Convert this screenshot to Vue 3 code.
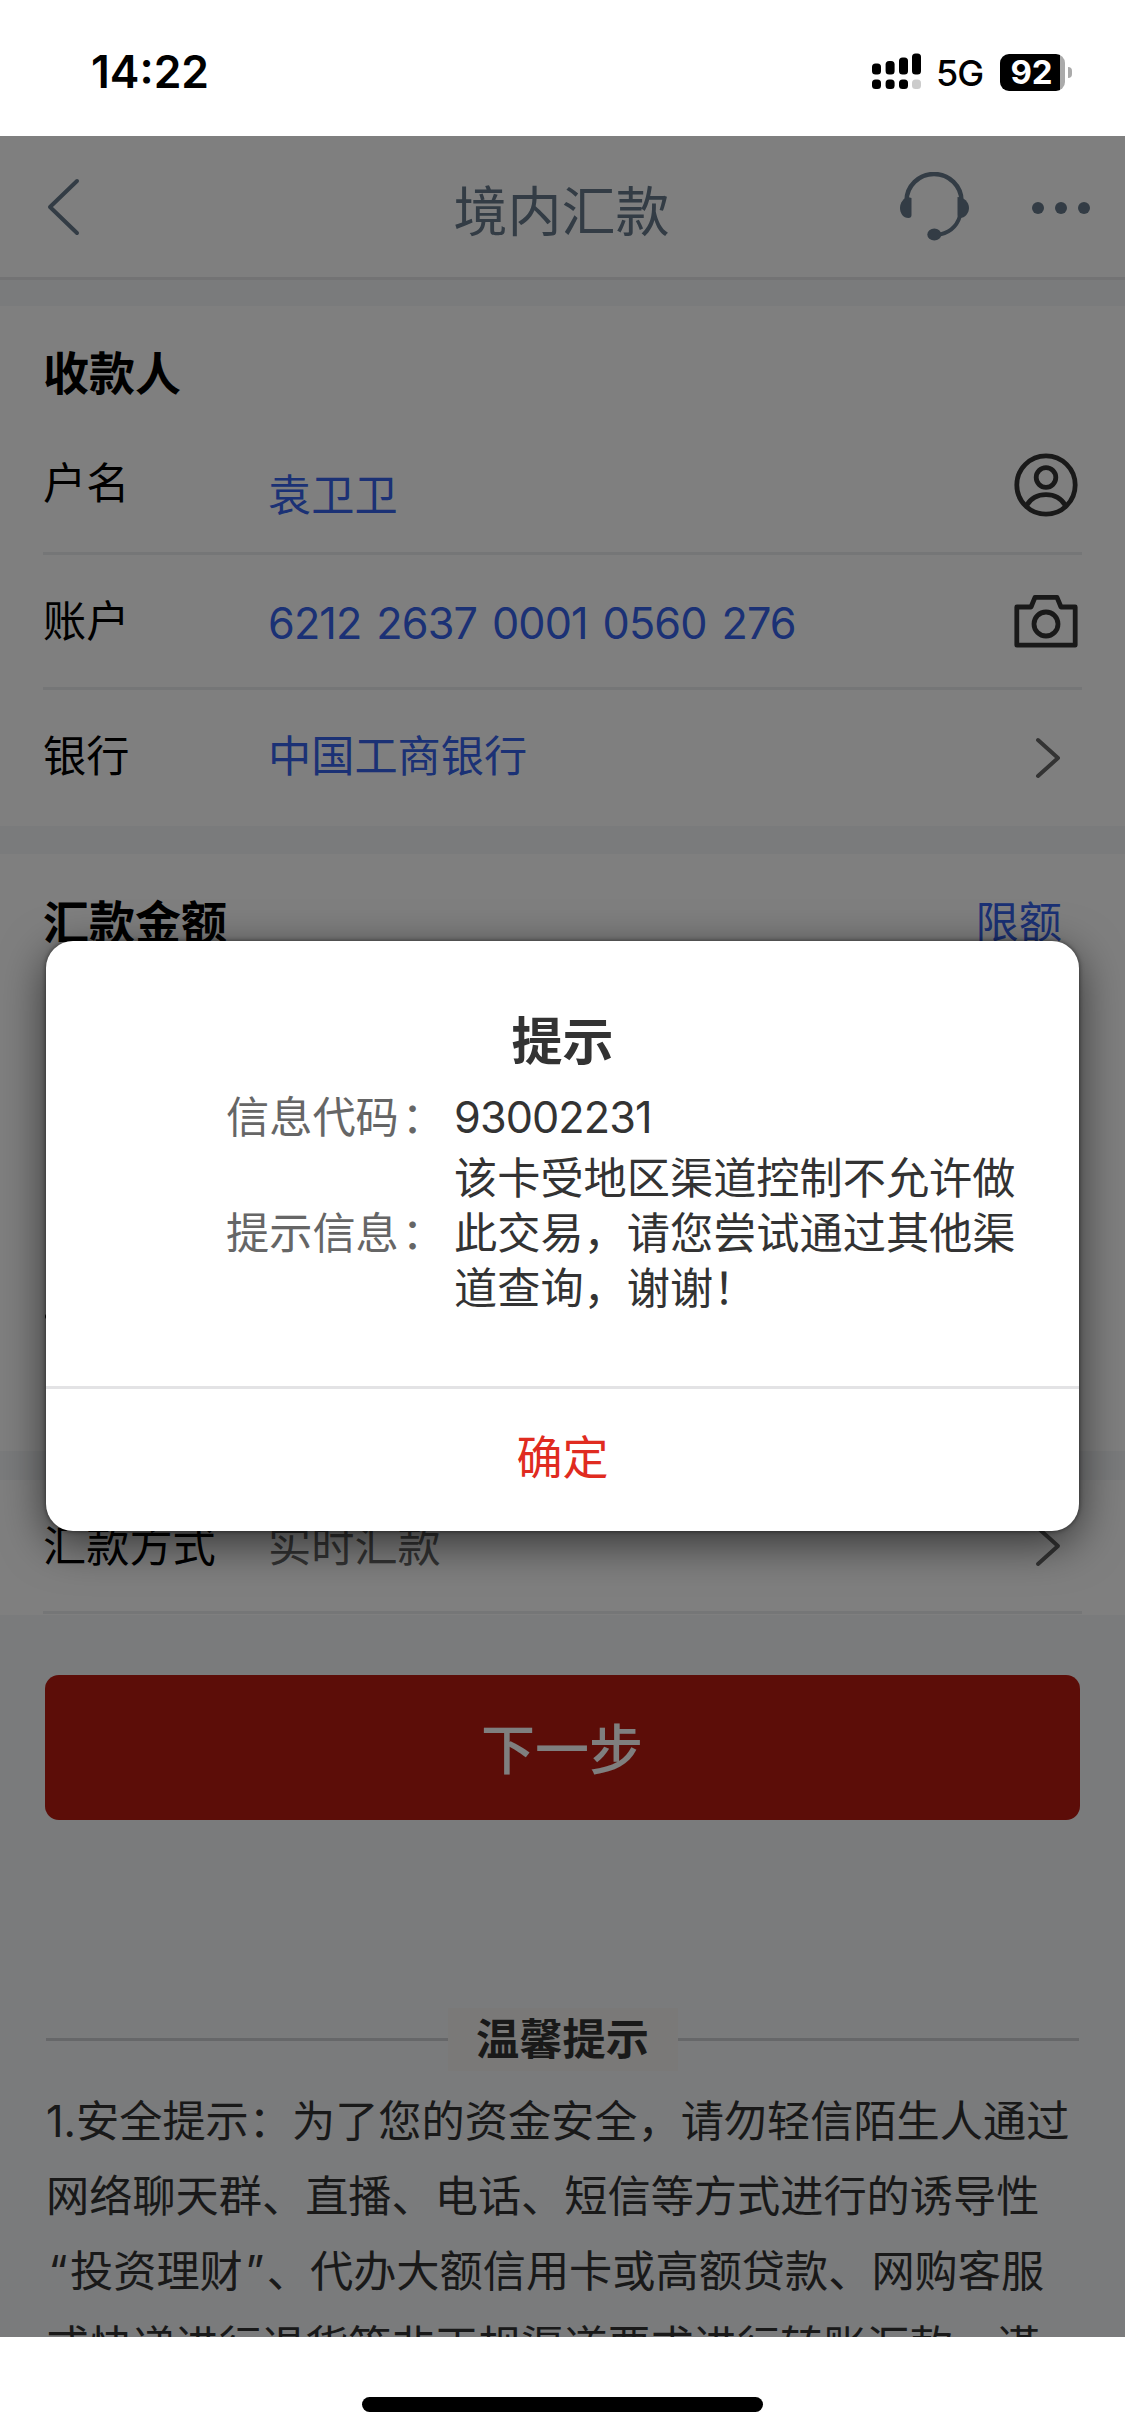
<script setup>
const tips = [
  ['1.安全提示：为了您的资金安全，请勿轻信陌生人通过'],
  ['网络聊天群、直播、电话、短信等方式进行的诱导性'],
  ['“', '投资理财', '”', '、代办大额信用卡或高额贷款、网购客服'],
  ['或快递进行退货等非正规渠道要求进行转账汇款，谨'],
]
const message = ['该卡受地区渠道控制不允许做', '此交易，请您尝试通过其他渠', '道查询，谢谢！']
</script>

<template>
  <div class="screen">
    <header class="status">
      <span class="time">14:22</span>
      <div class="status-right">
        <svg class="signal" width="50" height="38" viewBox="0 0 50 38">
          <rect x="0" y="10.5" width="9" height="11" rx="3.5" />
          <rect x="13.6" y="8" width="9" height="13.5" rx="3.5" />
          <rect x="27" y="4.5" width="9" height="17" rx="3.5" />
          <rect x="40" y="0.5" width="9" height="21" rx="3.5" />
          <rect x="0" y="26.5" width="9" height="9.5" rx="3.5" />
          <rect x="13.6" y="26.5" width="9" height="9.5" rx="3.5" />
          <rect x="27" y="26.5" width="9" height="9.5" rx="3.5" />
          <rect x="40" y="26.5" width="9" height="9.5" rx="3.5" fill="#ccc" />
        </svg>
        <span class="net">5G</span>
        <div class="battery"><span>92</span></div>
        <i class="nub"></i>
      </div>
    </header>

    <div class="page">
      <nav class="nav">
        <svg class="back" width="36" height="60" viewBox="0 0 36 60" fill="none" stroke="#66798a" stroke-width="4" stroke-linecap="round" stroke-linejoin="round">
          <path d="M31 5 L4 31 L31 57" />
        </svg>
        <h1>境内汇款</h1>
        <div class="nav-icons">
          <svg width="70" height="70" viewBox="0 0 70 70">
            <path d="M7.5 29 A27 26.5 0 0 1 62.5 29" fill="none" stroke="#66798a" stroke-width="4.5" />
            <path d="M61 44 C57 57 47 62 37 63" fill="none" stroke="#66798a" stroke-width="4" />
            <path d="M12.5 26 V43 Q12.5 46 9.5 46 C4 46 1 41 1 36 C1 30 5 26 9 25 Z" fill="#66798a" />
            <path d="M58.5 25 C65 25 70 30 70 36 C70 41 66 46 61 46 Q58.5 46 58.5 43 Z" fill="#66798a" />
            <ellipse cx="35.3" cy="62.5" rx="7" ry="6" fill="#66798a" />
          </svg>
          <svg width="60" height="14" viewBox="0 0 60 14" fill="#66798a">
            <circle cx="7" cy="7" r="6" /><circle cx="30" cy="7" r="6" /><circle cx="53" cy="7" r="6" />
          </svg>
        </div>
      </nav>

      <section class="card payee">
        <h2>收款人</h2>
        <div class="row name">
          <label>户名</label><span class="value low">袁卫卫</span>
          <svg width="64" height="64" viewBox="0 0 64 64" fill="none" stroke="#333" stroke-width="4.8">
            <circle cx="32" cy="32" r="29.2" /><circle cx="32" cy="24.5" r="9.8" />
            <path d="M12.5 52.5 C21 38 43 38 51.5 52.5" />
          </svg>
        </div>
        <div class="row acct">
          <label>账户</label><span class="value digits">6212 2637 0001 0560 276</span>
          <svg width="64" height="64" viewBox="0 0 64 64" fill="none" stroke="#333" stroke-width="4.8" stroke-linejoin="round">
            <path d="M2.8 18 H17 L21 8.3 H43 L47 18 H61.2 V56.2 H2.8 Z" /><circle cx="32" cy="35" r="12" />
          </svg>
        </div>
        <div class="row bank">
          <label>银行</label><span class="value">中国工商银行</span>
          <svg class="chev" width="28" height="44" viewBox="0 0 28 44" fill="none" stroke="#666" stroke-width="4" stroke-linecap="round" stroke-linejoin="round">
            <path d="M3 4 L23 22 L3 40" />
          </svg>
        </div>
      </section>

      <section class="card amount">
        <div class="amount-head"><h2>汇款金额</h2><a>限额</a></div>
        <i class="mark"></i>
      </section>

      <section class="card method">
        <div class="row way">
          <label>汇款方式</label><span class="value gray">实时汇款</span>
          <svg class="chev" width="28" height="44" viewBox="0 0 28 44" fill="none" stroke="#666" stroke-width="4" stroke-linecap="round" stroke-linejoin="round">
            <path d="M3 4 L23 22 L3 40" />
          </svg>
        </div>
      </section>

      <button class="next">下一步</button>

      <div class="tips-title"><i></i><b>温馨提示</b><i></i></div>
      <div class="tips">
        <p v-for="(line, n) in tips" :key="n"><span v-for="(t, k) in line" :key="k" :class="{ quote: t.length === 1 }">{{ t }}</span></p>
      </div>

      <div class="mask"></div>
      <div class="dialog">
        <div class="dialog-body">
          <h3>提示</h3>
          <div class="info">
            <span class="key">信息代码<em>：</em></span><span class="num">93002231</span>
          </div>
          <div class="info">
            <span class="key">提示信息<em>：</em></span>
            <div><p v-for="m in message" :key="m">{{ m }}</p></div>
          </div>
        </div>
        <div class="ok">确定</div>
      </div>
    </div>

    <footer class="home"><i></i></footer>
  </div>
</template>

<style>
body { margin: 0; background: #fff; }
</style>

<style scoped>
* { box-sizing: border-box; }
h1, h2, h3, p { margin: 0; }
i, em { font-style: normal; display: block; }
.screen {
  width: 1125px; height: 2435px; overflow: hidden; background: #fff; color: #000;
  font-family: Inter, "Noto Sans CJK SC", sans-serif; font-size: 43.2px;
  display: flex; flex-direction: column; white-space: nowrap;
}
.status { height: 136px; flex: none; display: flex; justify-content: space-between; padding: 0 53px 0 91px; }
.time { font-size: 44.5px; font-weight: 600; line-height: 54px; margin-top: 45px; }
.status-right { display: flex; height: 38px; margin-top: 53px; align-items: center; }
.signal { margin-right: 14px; }
.net { font-size: 36px; font-weight: 500; width: 49px; margin-right: 15px; line-height: 38px; margin-top: 1px; letter-spacing: -1px; }
.battery {
  width: 65px; height: 37px; border-radius: 9px; color: #fff; font-size: 33px; font-weight: 700;
  line-height: 36px; text-align: center; padding-right: 2px;
  background: linear-gradient(90deg, #000 60px, #aaa 60px);
}
.nub { width: 4px; height: 11px; margin-left: 3px; border-radius: 0 4px 4px 0; background: #aaa; }
.page { position: relative; height: 2201px; flex: none; overflow: hidden; background: #f4f6f8; }
.nav {
  height: 144px; background: #fff; border-bottom: 3px solid #e6e7e9; display: flex;
  justify-content: space-between; padding: 0 34px 0 46px;
}
.back { margin-top: 40px; margin-right: 142px; }
.nav h1 { font-size: 54px; font-weight: 400; line-height: 80px; margin-top: 37px; color: #66798a; }
.nav-icons { display: flex; gap: 62px; }
.nav-icons svg:first-child { margin-top: 36px; }
.nav-icons svg:last-child { margin-top: 65px; }
.card { background: #fff; padding: 0 43px; }
h2 { font-size: 46px; font-weight: 700; line-height: 66px; }
.payee { margin-top: 26px; height: 520px; }
.payee h2 { padding-top: 34px; }
.row { display: flex; align-items: center; border-bottom: 3px solid #ebecef; padding-right: 4px; }
.row label { width: 225px; flex: none; line-height: 60px; }
.row .value { flex: 1; color: #3662ea; line-height: 60px; }
.name { height: 149px; padding-top: 12px; }
.name label { padding-bottom: 4px; }
.name .low { padding-top: 20px; }
.acct { height: 135px; }
.bank { height: 135px; border-bottom: none; }
.bank label, .bank .value { padding-bottom: 3px; }
.row .digits { letter-spacing: -0.9px; word-spacing: 3.7px; padding-top: 3px; }
.chev { margin-right: 15px; }
.row .gray { color: #666; }
.amount { margin-top: 28px; height: 597px; }
.amount-head { display: flex; justify-content: space-between; padding: 35px 20px 0 0; }
.amount-head a { color: #3662ea; line-height: 66px; }
.mark { width: 5px; height: 5px; border-radius: 2px; margin: 359px 0 0 2px; background: #000; }
.method { margin-top: 29px; height: 135px; }
.way { height: 134px; }
.next {
  display: block; width: 1035px; height: 145px; margin: 60px 45px 0; border: 0; border-radius: 14px;
  background: #b81a10; color: #fff; font: 500 54px Inter, "Noto Sans CJK SC", sans-serif; padding: 0 1px 3px 0;
}
.tips-title { display: flex; align-items: center; height: 63px; margin: 188px 46px 0; }
.tips-title i { flex: 1; height: 3px; background: #cccfd2; }
.tips-title b { width: 230px; line-height: 63px; text-align: center; background: #f4f2f0; color: #333; }
.tips { margin: 13px 46px 0; color: #333; }
.tips p { line-height: 75px; height: 75px; }
.tips .quote { display: inline-block; width: 24px; text-align: center; }
.mask { position: absolute; inset: 0; background: rgba(0, 0, 0, 0.5); }
.dialog {
  position: absolute; left: 46px; top: 805px; width: 1033px; height: 590px; border-radius: 27px;
  background: #fff; color: #333;
  box-shadow: 0 12px 45px rgba(0, 0, 0, 0.6), 0 0 5px rgba(0, 0, 0, 0.55);
}
.dialog-body { height: 448px; border-bottom: 3px solid #e3e3e5; padding-top: 64px; }
.dialog h3 { font-size: 51px; line-height: 74px; text-align: center; }
.info { display: flex; align-items: center; padding-left: 180px; line-height: 55px; }
.info + .info { margin-top: 6px; }
.info p { height: 55px; }
.info:nth-child(2) { margin-top: 10px; }
.num { letter-spacing: -0.9px; padding-top: 1px; }
.key { display: flex; width: 228px; color: #666; }
.key em { margin-left: 3px; }
.ok { font-size: 46px; line-height: 137px; text-align: center; color: #e02b20; }
.home { flex: 1; display: flex; justify-content: center; align-items: flex-start; }
.home i { width: 401px; height: 15px; border-radius: 8px; background: #000; margin-top: 60px; }
</style>
